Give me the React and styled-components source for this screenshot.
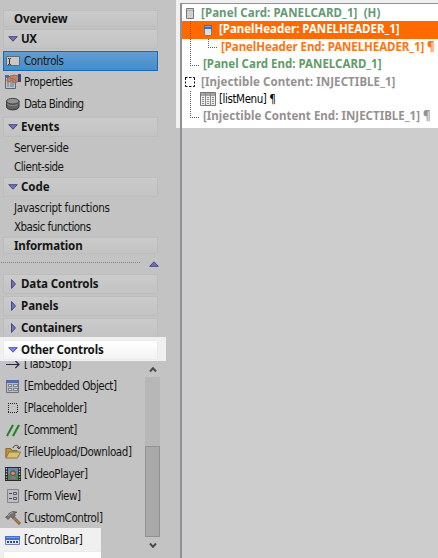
import React, { useLayoutEffect, useRef } from "react";
import styled, { createGlobalStyle, css } from "styled-components";

const Global = createGlobalStyle`
  * { box-sizing: border-box; }
  body { margin: 0; background: #c3c3c3; overflow: hidden; }
  svg { flex: none; display: block; }
`;

const boldFont = css`
  font-family: "Noto Sans", "DejaVu Sans", sans-serif;
  font-weight: bold;
`;

const regularFont = css`
  font-family: "DejaVu Sans Condensed", "DejaVu Sans", sans-serif;
  font-stretch: condensed;
  font-weight: normal;
`;

const Window = styled.div`
  display: flex;
  width: 438px;
  height: 558px;
  overflow: hidden;
  background: #c3c3c3;
  ${regularFont}
  font-size: 11.5px;
  line-height: 16px;
  color: #151515;
`;

const Sidebar = styled.aside`
  width: 176px;
  flex: none;
  display: flex;
  flex-direction: column;
  padding-top: 10px;
`;

const Header = styled.div`
  display: flex;
  align-items: center;
  width: 155px;
  height: ${(p) => (p.$plain ? 17 : 20)}px;
  margin: 0 0 ${(p) => p.$gap ?? 2}px 3px;
  padding: ${(p) => (p.$plain ? 1 : 0)}px 0 ${(p) => (p.$plain ? 0 : 1)}px ${(p) => (p.$plain ? 10 : 4)}px;
  border: 1px solid ${(p) => (p.$lit ? "#ebebeb" : "#bdbdbd")};
  background: ${(p) => (p.$lit ? "linear-gradient(#ffffff, #f3f3f3)" : "linear-gradient(#cbcbcb, #c3c3c3)")};
  ${boldFont}
  flex: none;
  gap: 3px;
`;

const Lit = styled.div`
  background: #f0f0f0;
  width: ${(p) => p.$width}px;
  height: ${(p) => p.$height}px;
  padding-top: ${(p) => p.$top}px;
  margin-top: ${(p) => p.$pull ?? 0}px;
  flex: none;
  overflow: hidden;
`;

const NavItem = styled.div`
  display: flex;
  align-items: center;
  flex: none;
  width: 155px;
  height: ${(p) => p.$height ?? 22}px;
  margin-left: 3px;
  padding: 0 0 ${(p) => p.$lift ?? 0}px ${(p) => (p.$text ? 11 : 2)}px;
  gap: 3px;
  ${(p) =>
    p.$selected &&
    css`
      height: 20px;
      padding: 0 0 1px 1px;
      border: 1px solid #1b69af;
      background: linear-gradient(#639dd2, #438dcb);
    `}
`;

const Splitter = styled.div`
  display: flex;
  height: 20px;
  flex: none;
  padding: 7px 0 0 1px;
  gap: 9px;
`;

const Dots = styled.div`
  width: 139px;
  height: 1px;
  margin-top: 1px;
  background: repeating-linear-gradient(90deg, #808080 0 1px, transparent 1px 2px);
`;

const ListArea = styled.div`
  display: flex;
  width: 160px;
  height: 197px;
  flex: none;
`;

const List = styled.div`
  width: 145px;
  height: 197px;
  overflow: hidden;
`;

const ListRows = styled.div`
  margin-top: -8px;
`;

const ListItem = styled.div`
  display: flex;
  align-items: center;
  height: 22px;
  padding-left: 5px;
  gap: 3px;
`;

const Scrollbar = styled.div`
  display: flex;
  flex-direction: column;
  width: 15px;
  height: 192px;
`;

const ScrollButton = styled.div`
  height: 16px;
  display: flex;
  align-items: center;
  justify-content: center;
  background: #c3c3c3;
`;

const Track = styled.div`
  height: 160px;
  padding-top: 69px;
  background: #b7b7b7;
`;

const Thumb = styled.div`
  height: 91px;
  border: 1px solid #929292;
  background: #a9a9a9;
`;

const Main = styled.main`
  width: 262px;
  padding: 3px 0 0 4px;
  background: linear-gradient(#f0f0f0 0 128px, #c3c3c3 128px);
`;

const Tree = styled.div`
  position: relative;
  height: 555px;
  border-left: 2px solid #909196;
  border-top: 1px solid #909196;
  background: linear-gradient(#ffffff 0 124px, #cdcdcd 124px);
`;

const TreeRow = styled.div`
  ${(p) => (p.$regular ? regularFont : boldFont)}
  display: flex;
  align-items: center;
  height: ${(p) => p.$height}px;
  padding-left: ${(p) => p.$indent}px;
  padding-bottom: ${(p) => p.$lift ?? 0}px;
  color: ${(p) => p.$color};
  background: ${(p) => p.$fill ?? "transparent"};
`;

const IconCell = styled.span`
  width: ${(p) => p.$width ?? 16}px;
  height: 16px;
  display: flex;
  align-items: center;
  justify-content: ${(p) => p.$align ?? "center"};
  flex: none;
`;

const Branches = styled.svg`
  position: absolute;
  left: 0;
  top: 0;
`;

const LabelText = styled.span`
  white-space: pre;
  display: inline-block;
`;

/* Spreads a label's letters so that it fills its set width. */
function Label({ w, children }) {
  const ref = useRef(null);
  useLayoutEffect(() => {
    const el = ref.current;
    el.style.letterSpacing = "0px";
    const natural = el.getBoundingClientRect().width;
    el.style.letterSpacing = `${(w + 0.5 - natural) / children.length}px`;
  }, [w, children]);
  return <LabelText ref={ref}>{children}</LabelText>;
}

function Arrow({ dir, lit }) {
  const fill = lit ? "#8585ec" : "#7272b4";
  const stroke = lit ? "#5252b0" : "#484888";
  if (dir === "right")
    return (
      <svg width="9" height="12" viewBox="0 0 9 12">
        <path d="M2.5 1.5v9L6.5 6z" fill={fill} stroke={stroke} />
      </svg>
    );
  return (
    <svg width="10" height="6" viewBox="0 0 10 6">
      <path d={dir === "up" ? "M.7 5.3h8.6L5 .8z" : "M.7.7h8.6L5 5.2z"} fill={fill} stroke={stroke} />
    </svg>
  );
}

const drawings = {
  field: (
    <>
      <path d="M1.5 3.5h13v9h-13z" fill="#c8c8c8" stroke="#646970" />
      <path d="M3 5.5h1l.5.5.5-.5h1M4.5 6v5M3 11.5h1l.5-.5.5.5h1" stroke="#303030" fill="none" />
    </>
  ),
  properties: (
    <>
      <path d="M.5 2.5h10v12H.5z" fill="#bfc5ca" stroke="#586674" />
      <path d="M0 1h4v3H0z" fill="#4c68a8" />
      <path d="M2 8h2M5 8h4M2 10h2M5 10h4M2 12h2M5 12h4" stroke="#66727c" />
      <path d="M2 5l3-3 4-1 5 1v5l-4 2-2-1-1-2-3 2-2-1z" fill="#bf8265" stroke="#865541" strokeWidth=".7" />
      <path d="M5 4l4 1 2 2" stroke="#865541" fill="none" strokeWidth=".7" />
      <path d="M13 0h3v8h-3z" fill="#344a80" />
    </>
  ),
  database: (
    <>
      <path d="M1.5 5v5.5C1.5 15 14 15 14 10.5V5z" fill="#626262" stroke="#333" />
      <path d="M2 7.5c1 2.7 9.5 3 11.5 0" stroke="#8e8e8e" fill="none" />
      <ellipse cx="7.75" cy="5.2" rx="6.3" ry="2.8" fill="#929292" stroke="#424242" />
    </>
  ),
  tab: <path d="M1 8.5h13M10.3 4.8L14 8.5l-3.7 3.7" fill="none" stroke="#24244f" strokeWidth="1.2" />,
  table: (
    <>
      <path d="M1.5 2.5h12v12h-12z" fill="#b8bdc3" stroke="#6b7482" />
      <path d="M1 2h13v3H1z" fill="#536ca5" />
      <path d="M3 6h4v3H3zM8 6h5v3H8zM3 10h4v3H3zM8 10h5v3H8z" fill="#7b8491" />
      <path d="M4 7h2v1H4zM9 7h3v1H9zM4 11h2v1H4zM9 11h3v1H9z" fill="#dcdcdc" />
    </>
  ),
  placeholder: (
    <path d="M3 3.5h10M3 12.5h10M3.5 5v8M12.5 5v8" fill="none" stroke="#222" strokeDasharray="1 1" />
  ),
  comment: (
    <>
      <path d="M2 14L8 3M8 14l6-11" stroke="#1f7b20" strokeWidth="2" />
      <path d="M2.8 14L8.8 3M8.8 14l6-11" stroke="#59a450" strokeWidth=".5" />
    </>
  ),
  folder: (
    <>
      <path d="M.8 13.5V4.5h5l1 2H12v7z" fill="#b99341" stroke="#8a6d33" />
      <path d="M1 14l3-6h11.5l-3 6z" fill="#d8bd75" stroke="#94773a" />
      <path d="M8 4c1-4 6-3 6 0M12 3l2 2 1.5-2.5" fill="none" stroke="#3d3d3d" />
    </>
  ),
  film: (
    <>
      <path d="M0 1h16v14H0z" fill="#26282a" />
      <path d="M1.5 2v12M14.5 2v12" stroke="#c0c0c0" strokeWidth="1.3" strokeDasharray="1.4 1.4" />
      <path d="M3 2h10v6H3z" fill="#6287b8" />
      <path d="M3 8h10v6H3z" fill="#4f8a48" />
      <circle cx="8" cy="7" r="2.8" fill="#744b3a" />
      <circle cx="8" cy="7.3" r="1.8" fill="#c89070" />
      <path d="M5 13c0-4 6-4 6 0z" fill="#8e6e98" />
    </>
  ),
  form: (
    <>
      <path d="M2.5 1.5h11v13h-11z" fill="#bdbec4" stroke="#81828c" />
      <path d="M4 5.5h3M4 10.5h3" stroke="#484a55" />
      <path d="M8.5 4.5h3v2h-3zM8.5 9.5h3v2h-3z" fill="#c5c5c5" stroke="#585a65" />
    </>
  ),
  hammer: (
    <>
      <path d="M7 6l8 8" stroke="#755431" strokeWidth="3" />
      <path d="M7.3 6.3l7.2 7.2" stroke="#ad8049" strokeWidth="1.6" />
      <path d="M.5 7l2-1 2-3L8 1.5l4 .7-2.5 1.5.8 2L7.5 8 5.8 6.5 3 9.5z" fill="#73766f" stroke="#4c4f4c" strokeWidth=".7" />
      <path d="M3 6l2.5-2.6L8 2.5" stroke="#a9aca7" fill="none" />
    </>
  ),
  bar: (
    <>
      <path d="M.5 4.5h14v8H.5z" fill="#dde4f1" stroke="#6f84b4" />
      <path d="M0 4h15v4H0z" fill="#456dd2" />
      <path d="M1 5.5h13" stroke="#7798ed" />
      <path d="M2 10h11" stroke="#3a4e78" strokeWidth="2" strokeDasharray="2 1" />
    </>
  ),
  card: (
    <>
      <path d="M4.5 3.5h7v10h-7z" fill="#d2d2d2" stroke="#777" />
      <path d="M5 5.5h6" stroke="#aaa" />
      <path d="M6 8.5h4M6 10.5h4" stroke="#c8c8c8" />
    </>
  ),
  panelHeader: (
    <>
      <path d="M4.5 4.5h7v10h-7z" fill="#dededf" stroke="#777681" />
      <path d="M4 4h8v4H4z" fill="#446fb6" />
      <path d="M5 5.5h6" stroke="#86a7e0" />
    </>
  ),
  inject: (
    <path
      d="M3 3.5h2.5M3.5 3v3M7 3.5h2.5M11 3.5h1.5V6M12.5 7.5v2M12.5 11v1.5H11M9.5 12.5H7M5.5 12.5h-2V11M3.5 9.5v-2"
      fill="none"
      stroke="#111"
    />
  ),
  list: (
    <>
      <path d="M.5 1.5h15v13H.5z" fill="#ededed" stroke="#777" />
      <path d="M1 2h14v3H1z" fill="#a3a3a3" />
      <path d="M5.5 2v12M10.5 2v12" stroke="#888" />
      <path d="M2 6.5h2M7 6.5h2M12 6.5h2M2 8.5h2M7 8.5h2M12 8.5h2M2 10.5h2M7 10.5h2M12 10.5h2M2 12.5h2M7 12.5h2M12 12.5h2" stroke="#8b8b8b" />
    </>
  ),
};

const Icon = ({ name }) => (
  <svg width="16" height="16" viewBox="0 0 16 16">
    {drawings[name]}
  </svg>
);

function Section({ title, w, dir = "down", gap, lit }) {
  return (
    <Header $gap={gap} $lit={lit}>
      <IconCell $width={10}>
        <Arrow dir={dir} lit={lit} />
      </IconCell>
      <Label w={w}>{title}</Label>
    </Header>
  );
}

const items = [
  ["tab", "[TabStop]", 47],
  ["table", "[Embedded Object]", 92],
  ["placeholder", "[Placeholder]", 62],
  ["comment", "[Comment]", 52],
  ["folder", "[FileUpload/Download]", 107],
  ["film", "[VideoPlayer]", 63],
  ["form", "[Form View]", 56],
  ["hammer", "[CustomControl]", 78],
];

export default function App() {
  return (
    <>
      <Global />
      <Window>
        <Sidebar>
          <Header $plain>
            <Label w={53}>Overview</Label>
          </Header>
          <Section title="UX" w={15} />
          <NavItem $selected>
            <Icon name="field" />
            <Label w={39}>Controls</Label>
          </NavItem>
          <NavItem>
            <Icon name="properties" />
            <Label w={48}>Properties</Label>
          </NavItem>
          <NavItem $height={24} $lift={2}>
            <Icon name="database" />
            <Label w={59}>Data Binding</Label>
          </NavItem>
          <Section title="Events" w={38} gap={1} />
          <NavItem $text $height={20}>
            <Label w={54}>Server-side</Label>
          </NavItem>
          <NavItem $text $height={19} $lift={1}>
            <Label w={49}>Client-side</Label>
          </NavItem>
          <Section title="Code" w={28} gap={1} />
          <NavItem $text $height={20}>
            <Label w={95}>Javascript functions</Label>
          </NavItem>
          <NavItem $text $height={19} $lift={1}>
            <Label w={76}>Xbasic functions</Label>
          </NavItem>
          <Header $plain $gap={0}>
            <Label w={68}>Information</Label>
          </Header>
          <Splitter>
            <Dots />
            <Arrow dir="up" />
          </Splitter>
          <Section title="Data Controls" w={77} dir="right" />
          <Section title="Panels" w={37} dir="right" />
          <Section title="Containers" w={61} dir="right" gap={0} />
          <Lit $width={166} $height={24} $top={3} $pull={-1}>
            <Section title="Other Controls" w={82} lit />
          </Lit>
          <ListArea>
            <List>
              <ListRows>
                {items.map(([icon, text, w]) => (
                  <ListItem key={icon}>
                    <Icon name={icon} />
                    <Label w={w}>{text}</Label>
                  </ListItem>
                ))}
              </ListRows>
              <Lit $width={101} $height={30} $top={1} $pull={-1}>
                <ListItem>
                  <Icon name="bar" />
                  <Label w={58}>[ControlBar]</Label>
                </ListItem>
                <Header $lit />
              </Lit>
            </List>
            <Scrollbar>
              <ScrollButton>
                <svg width="8" height="7" viewBox="0 0 8 7">
                  <path d="M1 5.5l3-3.3 3 3.3" fill="none" stroke="#494949" strokeWidth="2" />
                </svg>
              </ScrollButton>
              <Track>
                <Thumb />
              </Track>
              <ScrollButton>
                <svg width="8" height="7" viewBox="0 0 8 7">
                  <path d="M1 1.5l3 3.3 3-3.3" fill="none" stroke="#494949" strokeWidth="2" />
                </svg>
              </ScrollButton>
            </Scrollbar>
          </ListArea>
        </Sidebar>
        <Main>
          <Tree>
            <TreeRow $height={17} $indent={0} $color="#689876">
              <IconCell $width={19} $align="flex-start"><Icon name="card" /></IconCell>
              <Label w={179}>[Panel Card: PANELCARD_1]  (H)</Label>
            </TreeRow>
            <TreeRow $height={18} $indent={18} $lift={3} $color="#fff" $fill="#ff6a00">
              <IconCell $width={19} $align="flex-start"><Icon name="panelHeader" /></IconCell>
              <Label w={180}>[PanelHeader: PANELHEADER_1]</Label>
            </TreeRow>
            <TreeRow $height={16} $indent={39} $color="#ff7410">
              <Label w={213}>[PanelHeader End: PANELHEADER_1] ¶</Label>
            </TreeRow>
            <TreeRow $height={18} $indent={21} $color="#639b67">
              <Label w={178}>[Panel Card End: PANELCARD_1]</Label>
            </TreeRow>
            <TreeRow $height={17} $indent={0} $color="#969191">
              <IconCell $width={19} $align="flex-start"><Icon name="inject" /></IconCell>
              <Label w={194}>[Injectible Content: INJECTIBLE_1]</Label>
            </TreeRow>
            <TreeRow $height={17} $indent={18} $color="#080808" $regular>
              <IconCell $width={19} $align="flex-start"><Icon name="list" /></IconCell>
              <Label w={56}>[listMenu] ¶</Label>
            </TreeRow>
            <TreeRow $height={18} $indent={21} $color="#969191">
              <Label w={227}>[Injectible Content End: INJECTIBLE_1] ¶</Label>
            </TreeRow>
            <Branches width="40" height="124" fill="none" stroke="#606060" strokeDasharray="1 1">
              <path d="M8.5 17v44M8 61.5h9M26.5 35v8M26 43.5h10M8.5 87v26M8 113.5h9" />
            </Branches>
          </Tree>
        </Main>
      </Window>
    </>
  );
}
